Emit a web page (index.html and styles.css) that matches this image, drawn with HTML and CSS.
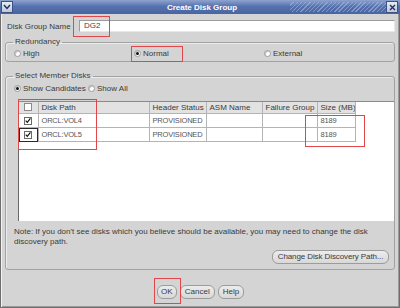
FILE: index.html
```html
<!doctype html>
<html lang="en">
<head>
    <meta charset="utf-8" />
    <meta name="viewport" content="width=device-width,initial-scale=1" />
    <title>Create Disk Group</title>
    <link rel="stylesheet" href="styles.css">
</head>
<body>
<div class="window">
    <div class="titlebar">
        <span class="tb-btn menu-btn">
            <svg width="8" height="6" viewBox="0 0 8 6"><path d="M1 1 L4 4.5 L7 1" fill="none" stroke="#1d2f5a" stroke-width="1.4"/></svg>
        </span>
        <span class="title">Create Disk Group</span>
        <span class="tb-btn close-btn">
            <svg width="7" height="7" viewBox="0 0 7 7"><path d="M1 1 L6 6 M6 1 L1 6" fill="none" stroke="#1d2f5a" stroke-width="1.3"/></svg>
        </span>
    </div>

    <div class="content">
        <div class="name-row">
            <label for="dgname">Disk Group Name</label>
            <div class="textbox" id="dgname">DG2</div>
        </div>

        <fieldset class="group redundancy">
            <legend>Redundancy</legend>
            <div class="radios">
                <span class="radio"><i></i>High</span>
                <span class="radio checked"><i></i>Normal</span>
                <span class="radio"><i></i>External</span>
            </div>
        </fieldset>

        <fieldset class="group disks">
            <legend>Select Member Disks</legend>
            <div class="radios show">
                <span class="radio checked"><i></i>Show Candidates</span>
                <span class="radio"><i></i>Show All</span>
            </div>

            <div class="scrollpane">
                <table class="disk-table">
                    <colgroup>
                        <col style="width:19px"><col style="width:111px"><col style="width:57px">
                        <col style="width:56px"><col style="width:55px"><col style="width:38px">
                    </colgroup>
                    <thead>
                        <tr>
                            <th class="sel"><span class="check"></span></th>
                            <th>Disk Path</th>
                            <th>Header Status</th>
                            <th>ASM Name</th>
                            <th>Failure Group</th>
                            <th>Size (MB)</th>
                        </tr>
                    </thead>
                    <tbody>
                        <tr>
                            <td class="sel"><span class="check on"><svg width="7" height="7" viewBox="0 0 7 7"><path d="M0.8 3.6 L2.7 5.6 L6.3 1" fill="none" stroke="#111" stroke-width="1.4"/></svg></span></td>
                            <td>ORCL:VOL4</td>
                            <td>PROVISIONED</td>
                            <td></td>
                            <td></td>
                            <td>8189</td>
                        </tr>
                        <tr>
                            <td class="sel focus"><span class="check on"><svg width="7" height="7" viewBox="0 0 7 7"><path d="M0.8 3.6 L2.7 5.6 L6.3 1" fill="none" stroke="#111" stroke-width="1.4"/></svg></span></td>
                            <td>ORCL:VOL5</td>
                            <td>PROVISIONED</td>
                            <td></td>
                            <td></td>
                            <td>8189</td>
                        </tr>
                    </tbody>
                </table>
            </div>

            <p class="note">Note: If you don't see disks which you believe should be available, you may need to change the disk discovery path.</p>
            <div class="note-actions">
                <button type="button" class="btn">Change Disk Discovery Path...</button>
            </div>
        </fieldset>
    </div>

    <div class="actions">
        <button type="button" class="btn ok">OK</button>
        <button type="button" class="btn">Cancel</button>
        <button type="button" class="btn">Help</button>
    </div>

    <!-- red highlight marks drawn over the screenshot -->
    <div class="mark mark-name"></div>
    <div class="mark mark-normal"></div>
    <div class="mark mark-path"></div>
    <div class="mark mark-size"></div>
    <div class="mark mark-ok"></div>
</div>
</body>
</html>
```

FILE: styles.css
```css
body { margin:0; font-family:"Liberation Sans", Arial, sans-serif; font-size:8px; color:#3a3a3a; }

.window {
    position:relative; width:400px; height:308px; box-sizing:border-box;
    background:#d4d4d4; border:1px solid #6e6e6e; border-top:none;
    box-shadow:inset 1px 0 0 #f2f2f2, inset 0 -1px 0 #9a9a9a, inset -1px 0 0 #9a9a9a;
}

/* title bar */
.titlebar {
    display:flex; align-items:center; height:14px; margin:0 -1px;
    background:
        repeating-linear-gradient(135deg, rgba(255,255,255,0) 0 2px, rgba(170,190,230,.55) 2px 3px) right 14px top 2px / 96px 10px no-repeat,
        linear-gradient(#8ea3cf, #5672ae 45%, #4865a3);
}
.tb-btn {
    display:flex; align-items:center; justify-content:center;
    width:12px; height:12px; box-sizing:border-box;
    background:linear-gradient(#e6ebf4, #bfc8da); border:1px solid #3c5288;
}
.menu-btn { margin-left:1px; }
.close-btn { margin-right:2px; }
.title { flex:1; text-align:center; color:#fff; font-weight:bold; font-size:8px; padding-left:5px; }

/* body */
.content { padding:6px 4px 0 4px; }
.name-row { display:flex; align-items:center; height:12px; }
.name-row label { width:72px; padding-left:2px; }
.textbox {
    flex:1; height:12px; box-sizing:border-box; background:#fff;
    border:1px solid #9c9c9c; border-bottom-color:#e8e8e8; border-right-color:#e8e8e8;
    padding:0 0 0 4px; line-height:10px; color:#444;
}

.group {
    margin:0; border:1px solid #a2a2a2; border-radius:3px;
    box-shadow:inset 1px 1px 0 #ececec;
}
.group legend { padding:0 2px; margin-left:-1px; line-height:10px; }
.redundancy { margin-top:5px; padding:1px 0 3px 8px; }
.disks { margin-top:9px; padding:2px 0 5px 8px; }

.radios { display:grid; grid-template-columns:120px 130px 1fr; height:10px; align-items:center; }
.radios.show { grid-template-columns:74px 1fr; }
.radio { display:flex; align-items:center; gap:2px; white-space:nowrap; }
.radio i {
    width:7px; height:7px; box-sizing:border-box; border-radius:50%;
    background:#fff; border:1px solid #9a9a9a; box-shadow:inset 1px 1px 0 #c8c8c8;
    display:flex; align-items:center; justify-content:center;
}
.radio.checked i::after { content:""; width:3px; height:3px; border-radius:50%; background:#111; }

/* table */
.scrollpane {
    margin:8px 0 0 4px; height:120px; background:#fff;
    border-left:1px solid #6a6a6a; border-top:1px solid #8a8a8a;
    box-sizing:border-box;
}
.disk-table { border-collapse:collapse; table-layout:fixed; width:336px; }
.disk-table th, .disk-table td {
    border:1px solid #b4b4b4; padding:0 0 0 3px; text-align:left;
    white-space:nowrap; overflow:hidden; font-weight:normal;
}
.disk-table th { background:#e2e2e2; height:11px; line-height:11px; border-top:none; color:#3a3a3a; }
.disk-table td { height:13px; line-height:13px; color:#555; font-size:7.5px; letter-spacing:-0.2px; }
.disk-table th:first-child, .disk-table td:first-child { border-left:none; }
.disk-table .sel { padding:0; text-align:center; }
.disk-table .focus { outline:1px solid #2a2a2a; outline-offset:-1px; }
.check {
    display:inline-flex; align-items:center; justify-content:center; vertical-align:middle;
    width:8px; height:8px; box-sizing:border-box; background:#fff;
    border:1px solid #8a8a8a; margin-top:-1px;
}
.check.on { border-color:#6a6a6a; }

.note { margin:6px 0 0; line-height:10px; width:370px; }
.note-actions { display:flex; justify-content:flex-end; margin:3px 5px 0 0; }

.btn {
    font:inherit; color:#3a3a3a; height:14px; padding:0 4px; line-height:12px; white-space:nowrap;
    background:linear-gradient(#ececec, #d8d8d8); border:1px solid #9c9c9c; border-radius:6px;
}
.note-actions .btn { width:117px; padding:0; letter-spacing:-0.1px; }

.actions { display:flex; justify-content:center; gap:2px; margin-top:15px; padding-left:1px; }
.actions .ok { width:20px; padding:0; }
.actions .btn + .btn { margin-left:1px; }

/* annotations */
.mark { position:absolute; border:1px solid #e0464a; }
.mark-name { left:72px; top:16px; width:35px; height:19px; }
.mark-normal { left:130px; top:46px; width:50px; height:14px; }
.mark-path { left:17px; top:99px; width:77px; height:49px; }
.mark-size { left:304px; top:115px; width:58px; height:30px; }
.mark-ok { left:153px; top:278px; width:25px; height:24px; }
```
